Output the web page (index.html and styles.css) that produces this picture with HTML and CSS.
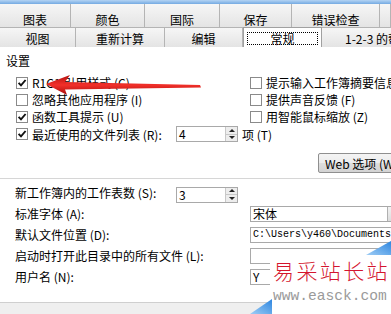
FILE: index.html
```html
<!DOCTYPE html>
<html lang="zh-CN">
<head>
  <meta charset="UTF-8">
  <meta name="viewport" content="width=device-width, initial-scale=1.0">
  <title>选项</title>
  <link rel="stylesheet" href="styles.css">
</head>
<body>
  <div class="topbar"></div>

  <div class="tabrow row1">
    <div class="tab">图表</div>
    <div class="tab">颜色</div>
    <div class="tab">国际</div>
    <div class="tab">保存</div>
    <div class="tab">错误检查</div>
    <div class="tab"></div>
  </div>
  <div class="tabrow row2">
    <div class="tab">视图</div>
    <div class="tab">重新计算</div>
    <div class="tab">编辑</div>
    <div class="tab active"><span class="focus">常规</span></div>
    <div class="tab last">1-2-3 的帮助</div>
  </div>

  <div class="panel">
    <div class="group-title">设置</div>

    <div class="opts">
      <div class="opt"><span class="box"><svg viewBox="0 0 10 10"><path d="M1.6 4.8 L4 7.4 L8.6 2"/></svg></span>R1C1 引用样式 (C)</div>
      <div class="opt"><span class="box"></span>提示输入工作簿摘要信息 (P)</div>
      <div class="opt"><span class="box"></span>忽略其他应用程序 (I)</div>
      <div class="opt"><span class="box"></span>提供声音反馈 (F)</div>
      <div class="opt"><span class="box"><svg viewBox="0 0 10 10"><path d="M1.6 4.8 L4 7.4 L8.6 2"/></svg></span>函数工具提示 (U)</div>
      <div class="opt"><span class="box"></span>用智能鼠标缩放 (Z)</div>
      <div class="opt wide">
        <span class="box"><svg viewBox="0 0 10 10"><path d="M1.6 4.8 L4 7.4 L8.6 2"/></svg></span>
        <span class="opt-label">最近使用的文件列表 (R):</span>
        <span class="spin"><span class="val">4</span><span class="arrows"><i class="up"></i><i class="down"></i></span></span>
        <span>项 (T)</span>
      </div>
    </div>

    <div class="web-row"><button class="btn">Web 选项 (W)...</button></div>

    <div class="sep"></div>

    <div class="form">
      <div class="frow">
        <span class="flabel short">新工作簿内的工作表数 (S):</span>
        <span class="spin"><span class="val">3</span><span class="arrows"><i class="up"></i><i class="down"></i></span></span>
      </div>
      <div class="frow">
        <span class="flabel">标准字体 (A):</span>
        <span class="field combo">宋体<span class="drop"></span></span>
      </div>
      <div class="frow">
        <span class="flabel">默认文件位置 (D):</span>
        <span class="field path">C:\Users\y460\Documents</span>
      </div>
      <div class="frow">
        <span class="flabel">启动时打开此目录中的所有文件 (L):</span>
        <span class="field"></span>
      </div>
      <div class="frow">
        <span class="flabel">用户名 (N):</span>
        <span class="field">Y</span>
      </div>
    </div>
  </div>

  <div class="bottom"></div>

  <!-- red arrow drawn over the first option -->
  <svg class="overlay" viewBox="0 0 391 314">
    <defs>
      <linearGradient id="red" x1="0" y1="0" x2="0" y2="1">
        <stop offset="0" stop-color="#b3120f"/>
        <stop offset="0.5" stop-color="#f2302a"/>
        <stop offset="1" stop-color="#a80e0c"/>
      </linearGradient>
    </defs>
    <path d="M46 84 L70 75 L65 82 L200 85 L201 87.5 L65 89.5 L67 95 Z" fill="url(#red)"/>
  </svg>

  <div class="watermark">
    <div class="wm-title">易采站长站</div>
    <div class="wm-url">www.easck.com</div>
  </div>
  <svg class="overlay" viewBox="0 0 391 314">
    <defs>
      <linearGradient id="blue" x1="0" y1="1" x2="1" y2="0">
        <stop offset="0" stop-color="#9fcdf5"/>
        <stop offset="1" stop-color="#2d86e0"/>
      </linearGradient>
    </defs>
    <polygon points="366,255 391,241 391,255" fill="url(#blue)"/>
    <polygon points="250,314 272,299 272,314" fill="url(#blue)"/>
  </svg>
</body>
</html>
```

FILE: styles.css
```css
* {
  box-sizing: border-box;
}

body {
  margin: 0;
  width: 391px;
  height: 314px;
  overflow: hidden;
  position: relative;
  background: #fff;
  color: #000;
  font-family: "Noto Sans CJK SC", "Liberation Sans", sans-serif;
  font-size: 12px;
}

.topbar {
  height: 4px;
  background: linear-gradient(#b4d4f4, #74aae2);
}

/* tabs */
.tabrow {
  display: grid;
  background: #ececec;
  white-space: nowrap;
}

.row1 {
  grid-template-columns: 71px 74px 75px 72px 88px 1fr;
  height: 24px;
  border-bottom: 1px solid #b4b4b4;
}

.row2 {
  grid-template-columns: 76px 89px 78px 79px 1fr;
  height: 19px;
}

.tab {
  line-height: 17px;
  text-align: center;
  border-right: 1px solid #b4b4b4;
  background: linear-gradient(#f6f6f6, #e4e4e4);
  overflow: hidden;
}

.row1 .tab {
  padding-top: 8px;
  line-height: 15px;
}

.row2 .tab {
  padding-top: 2px;
}

.row2 .tab.last {
  text-align: left;
  padding-left: 23px;
  border-right: none;
}

.row2 .tab.active {
  margin-top: -1px;
  padding-top: 0;
  background: #fff;
  border: 1px solid #a0a0a0;
  border-bottom: none;
  position: relative;
  z-index: 1;
}

.focus {
  display: block;
  margin: 4px 3px 0;
  height: 13px;
  line-height: 12px;
  border: 1px dotted #000;
}

/* white page */
.panel {
  height: 255px;
  overflow: hidden;
  background: #fff;
}

.group-title {
  padding: 5px 0 0 6px;
  line-height: 17px;
}

.opts {
  margin-top: 5px;
  display: grid;
  grid-template-columns: 234px 1fr;
  grid-template-rows: 17px 17px 17px 18px;
  padding-left: 16px;
}

.opt {
  display: flex;
  align-items: center;
  gap: 4px;
  line-height: 17px;
  white-space: nowrap;
  overflow: hidden;
}

.opt.wide {
  grid-column: 1 / 3;
}

.opt-label {
  width: 140px;
}

.box {
  width: 12px;
  height: 12px;
  flex: none;
  border: 1px solid #8a8a8a;
  background: #fff;
  display: flex;
}

.box svg {
  width: 10px;
  height: 10px;
  fill: none;
  stroke: #111;
  stroke-width: 1.9;
}

.spin {
  display: flex;
  width: 62px;
  height: 16px;
  flex: none;
  border: 1px solid #a9a9a9;
  background: #fff;
}

.spin .val {
  flex: 1;
  padding-left: 2px;
  line-height: 14px;
}

.arrows {
  width: 12px;
  display: flex;
  flex-direction: column;
  border-left: 1px solid #c8c8c8;
  background: #ededed;
}

.arrows i {
  flex: 1;
  display: flex;
  align-items: center;
  justify-content: center;
}

.arrows i.up {
  border-bottom: 1px solid #c8c8c8;
}

.arrows i::before {
  content: "";
  border-left: 3px solid transparent;
  border-right: 3px solid transparent;
}

.arrows i.up::before {
  border-bottom: 3px solid #222;
}

.arrows i.down::before {
  border-top: 3px solid #222;
}

.web-row {
  margin-top: 10px;
  padding-left: 318px;
  white-space: nowrap;
}

.btn {
  width: 86px;
  height: 20px;
  padding: 0 0 0 6px;
  text-align: left;
  white-space: nowrap;
  font: inherit;
  color: #000;
  border: 1px solid #8f8f8f;
  border-radius: 2px;
  background: linear-gradient(#f4f4f4, #ececec 50%, #dedede 50%, #d3d3d3);
}

.sep {
  margin-top: 5px;
  height: 1px;
  background: #d6d6d6;
}

.form {
  margin-top: 3px;
}

.frow {
  display: flex;
  align-items: center;
  height: 21px;
  padding-left: 15px;
  white-space: nowrap;
}

.frow .spin {
  margin-top: 4px;
}

.flabel {
  width: 235px;
  flex: none;
  line-height: 17px;
}

.flabel.short {
  width: 161px;
}

.field {
  width: 160px;
  height: 16px;
  flex: none;
  border: 1px solid #a9a9a9;
  padding-left: 2px;
  line-height: 14px;
  position: relative;
  overflow: hidden;
}

.field.path {
  font-family: "Liberation Mono", monospace;
  font-size: 10px;
}

.drop {
  position: absolute;
  left: 136px;
  top: 0;
  width: 18px;
  height: 14px;
  border-left: 1px solid #b0b0b0;
  background: linear-gradient(#f2f2f2, #dcdcdc);
}

.bottom {
  height: 12px;
  background: #efefef;
  border-top: 1px solid #cfcfcf;
}

/* overlays: arrow and watermark */
.overlay {
  position: absolute;
  left: 0;
  top: 0;
  width: 391px;
  height: 314px;
  pointer-events: none;
}

.watermark {
  position: absolute;
  left: 270px;
  top: 255px;
  width: 121px;
  height: 59px;
  background: #fff;
  padding-left: 3px;
  white-space: nowrap;
}

.wm-title {
  margin-top: 1px;
  font-size: 21px;
  font-weight: 300;
  line-height: 28px;
  letter-spacing: 2.4px;
  color: #d4152e;
}

.wm-url {
  margin-top: 4px;
  font-family: "Liberation Mono", monospace;
  font-size: 14.6px;
  line-height: 16px;
  color: #9a9a9a;
}
```
